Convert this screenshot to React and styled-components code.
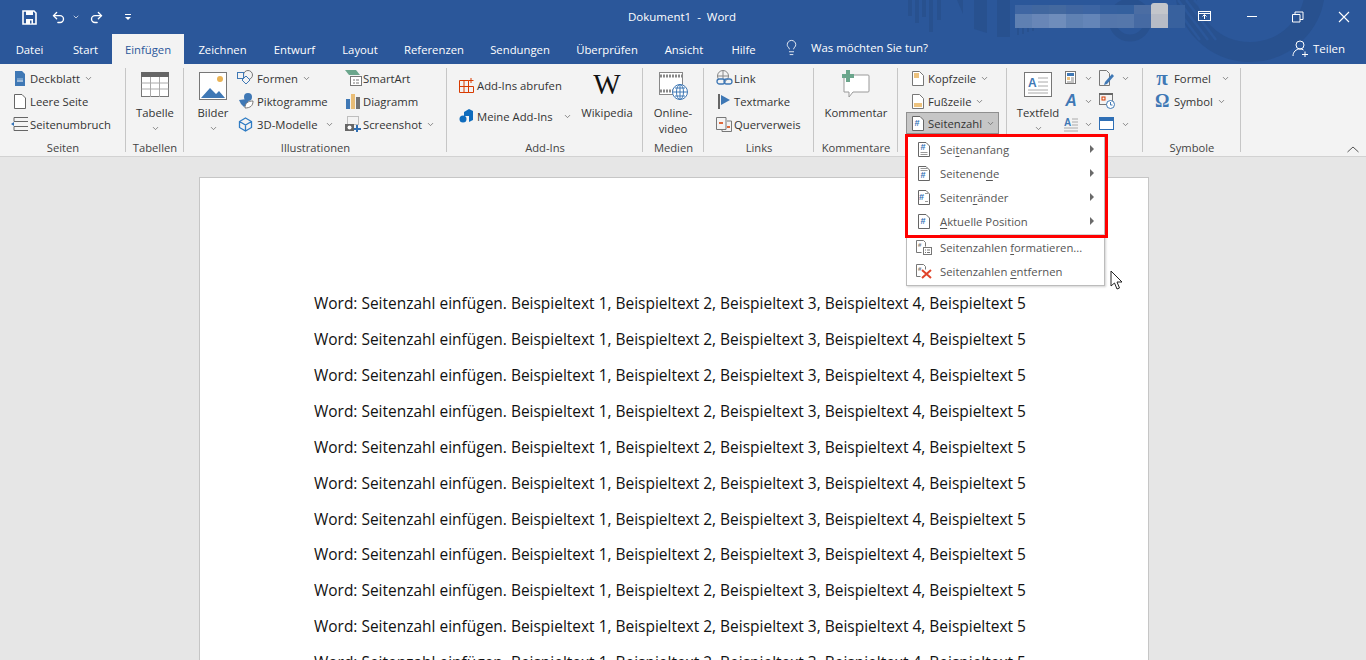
import React from "react";
import styled, { createGlobalStyle } from "styled-components";
import { Undo2, Redo2, ChevronDown, Lightbulb } from "lucide-react";

const G = createGlobalStyle`
  html,body{margin:0;padding:0;height:100%;overflow:hidden;background:#e6e6e6;}
  body{font-family:"Open Sans","Noto Sans",sans-serif;}
  #root{height:660px;overflow:hidden;}
`;
const Shell = styled.div`width:1366px;height:660px;overflow:hidden;display:flex;flex-direction:column;position:relative;`;
const Head = styled.div`height:64px;background:#2b579a;position:relative;color:#fff;flex:none;overflow:hidden;`;
const TitleRow = styled.div`height:34px;display:flex;align-items:center;position:relative;`;
const Qat = styled.div`display:flex;align-items:center;width:600px;padding-left:22px;`;
const UndoIcon = styled(Undo2)`margin-left:14px;flex:none;`;
const RedoIcon = styled(Redo2)`margin-left:9px;flex:none;`;
const QatCaret = styled(ChevronDown)`width:8px;height:8px;color:#fff;margin-left:6px;flex:none;`;
const QatMore = styled.svg`margin-left:21px;flex:none;`;
const Title = styled.div`position:absolute;left:628px;top:8px;font-size:11.5px;line-height:17px;white-space:pre;`;
const TabRow = styled.div`height:30px;display:flex;align-items:center;position:relative;`;
const Tab = styled.div`height:30px;width:${p=>p.$w}px;flex:none;display:flex;align-items:center;justify-content:center;font-size:11.3px;white-space:nowrap;
  background:${p=>p.$active?"#f3f3f3":"transparent"};color:${p=>p.$active?"#2b579a":"#fff"};`;
const Tell = styled.div`display:flex;align-items:center;gap:11px;margin-left:14px;margin-top:-3px;font-size:11.4px;`;
const Share = styled.div`position:absolute;left:1292px;top:6px;display:flex;align-items:center;gap:4px;font-size:11.5px;`;
const WinBtn = styled.div`position:absolute;left:${p=>p.$x}px;top:7px;width:16px;height:16px;`;
const Blur = styled.div`position:absolute;left:1015px;top:5px;width:170px;height:23px;display:flex;flex-wrap:wrap;`;
const BlurCell = styled.span`width:${p=>p.$w||17}px;height:${p=>p.$h}px;background:${p=>p.$c};`;
const BlurCap = styled.span`position:absolute;left:1151px;top:3px;width:17px;height:3px;border-radius:8px 8px 0 0;background:#c3c6cb;`;
const Deco = styled.svg`position:absolute;left:900px;top:0;`;

const Ribbon = styled.div`height:92px;background:#f3f3f3;border-bottom:1px solid #d2d2d2;flex:none;display:flex;position:relative;`;
const Group = styled.div`width:${p=>p.$w}px;flex:none;position:relative;display:flex;flex-direction:column;height:84px;margin-top:4px;
  &::after{content:"";position:absolute;right:0;top:0;bottom:0;width:1px;background:#c6c6c6;}`;
const GBody = styled.div`flex:1;min-height:0;display:flex;padding-left:${p=>p.$pl||0}px;`;
const GLabel = styled.div`height:14px;line-height:19px;text-align:center;font-size:11.2px;color:#444;white-space:pre;`;
const Col = styled.div`display:flex;flex-direction:column;margin-top:${p=>p.$mt??-1.5}px;margin-left:${p=>p.$ml||0}px;width:${p=>p.$w?p.$w+"px":"auto"};gap:${p=>p.$gap||0}px;`;
const Row = styled.div`height:23px;display:flex;align-items:center;font-size:11.3px;color:#333;white-space:nowrap;`;
const Ic = styled.span`width:${p=>p.$w||20}px;height:16px;display:flex;align-items:center;justify-content:center;flex:none;`;
const Big = styled.div`width:${p=>p.$w}px;margin-left:${p=>p.$ml||0}px;display:flex;flex-direction:column;align-items:center;font-size:11.3px;color:#333;line-height:16px;text-align:center;flex:none;`;
const BigIcon = styled.div`height:${p=>p.$h||26}px;margin-top:${p=>p.$mt??4}px;margin-bottom:${p=>p.$mb??7}px;display:flex;align-items:center;justify-content:center;`;
const Caret = styled(ChevronDown)`width:9px;height:9px;color:#666;stroke-width:2;margin-left:${p=>p.$ml||4}px;flex:none;`;
const BigCaret = styled(ChevronDown)`width:9px;height:9px;color:#666;stroke-width:2;margin-top:3px;flex:none;`;
const Pressed = styled(Row)`background:#c6c6c6;border:1px solid #8f8f8f;height:22px;box-sizing:border-box;width:93px;margin-left:-1px;margin-top:-.5px;`;
const WikiW = styled.span`font-family:"Liberation Serif",serif;font-size:29px;line-height:26px;color:#111;`;
const ItalicA = styled.span`font-family:"Liberation Sans",sans-serif;font-weight:700;font-style:italic;font-size:16px;color:#3f78b5;`;
const MathGlyph = styled.span`width:14px;flex:none;text-align:center;font-family:"Liberation Serif",serif;font-weight:700;font-size:${p=>p.$s}px;line-height:16px;color:#3f78b5;`;
const RowText = styled.span`margin-left:5px;`;
const Collapse = styled.svg`position:absolute;left:1347px;top:82px;`;

const Workspace = styled.div`flex:1;background:#e6e6e6;padding:20px 0 0 199px;display:flex;align-items:flex-start;overflow:hidden;`;
const Page = styled.div`width:950px;box-sizing:border-box;background:#fff;border:1px solid #c6c6c6;border-bottom:0;padding:107.2px 0 0 114px;height:600px;flex:none;`;
const Para = styled.div`font-size:15.47px;line-height:36px;height:35.9px;color:#111;white-space:nowrap;`;

const Menu = styled.div`position:absolute;left:906px;top:134px;width:199px;height:152px;background:#fff;border:1px solid #bcbcbc;box-shadow:1px 1px 2px rgba(0,0,0,.18);box-sizing:border-box;padding-top:2px;`;
const Item = styled.div`height:24px;display:flex;align-items:center;font-size:11.3px;color:#555;position:relative;white-space:nowrap;`;
const ItemIcon = styled.span`width:33px;display:flex;justify-content:center;flex:none;`;
const Arrow = styled.span`position:absolute;left:183px;top:8px;border-left:4px solid #6a6a6a;border-top:4px solid transparent;border-bottom:4px solid transparent;`;
const Sep = styled.div`height:1px;background:#d4d4d4;margin:1px 0 0 33px;`;
const U = styled.span`text-decoration:underline;text-underline-offset:2px;text-decoration-thickness:1px;`;
const RedBox = styled.div`position:absolute;left:905px;top:134px;width:203px;height:104px;border:3px solid #f00;box-sizing:border-box;pointer-events:none;`;
const Cursor = styled.svg`position:absolute;left:1110px;top:270px;`;

const Doc = ({c="#666",w=12,h=15,children})=><svg width={w} height={h} viewBox={`0 0 ${w} ${h}`}><path d={`M.5.5H${w-4}L${w-.5} 4V${h-.5}H.5Z`} fill="#fff" stroke={c}/>{children}</svg>;
const Hash = ({x=2.5,y=3})=><text x={x} y={y+6} fontSize="9" fontWeight="700" fill="#2f6fb5" fontFamily="Liberation Sans">#</text>;
const Lines = ({x1=2.5,x2=9.5,ys})=><path d={ys.map(y=>`M${x1} ${y}H${x2}`).join("")} stroke="#999"/>;

const lines = Array.from({length:11});
const tabs=[["Datei",59],["Start",53],["Einfügen",72,1],["Zeichnen",77],["Entwurf",67],["Layout",64],["Referenzen",84],["Sendungen",88],["Überprüfen",86],["Ansicht",68],["Hilfe",51]];
const blurTop=["#3f66a3","#41679f","#44699f","#3f65a0","#3d65a3","#35609f","#34609e","#4b6da3","#c3c6cb","#38619e"];
const blurBottom=["#5f80b2","#6886b7","#6f8dbb","#5f81b3","#6485b8","#5476ab","#5577ab","#466aa3","#b7bcc6","#38619e"];

export default function App(){
  return <Shell><G/>
  <Head>
    <Deco width="466" height="64" viewBox="0 0 466 64">
      <g fill="#28518f">
        <rect x="8" y="0" width="4" height="16"/><rect x="15" y="0" width="4" height="23"/><rect x="22" y="0" width="4" height="17"/><rect x="29" y="0" width="4" height="32"/><rect x="37" y="0" width="4" height="20"/>
        <path d="M57 0h6v14z"/><path d="M74 0h13v33l-13-4z"/><path d="M97 0h13v37H97z"/>
        <path d="M117 28h2v7h-2zM122 28h2v6h-2zM127 28h2v4h-2zM132 28h2v3h-2z"/>
      </g>
      <g fill="none" stroke="#28518f">
        <circle cx="350" cy="-13" r="65" strokeWidth="20"/>
        <circle cx="230" cy="20" r="18" strokeWidth="7"/>
      </g>
      <path d="M270 0l30 40M278 0l30 40M286 0l30 40M294 0l30 30" stroke="#2b579a" strokeWidth="2.500" fill="none"/>
    </Deco>
    <TitleRow>
      <Qat>
        <svg width="15" height="15" viewBox="0 0 15 15"><path d="M1 1h11l2 2v11H1z" fill="none" stroke="#fff" strokeWidth="1.600"/><rect x="4" y="1" width="7" height="4" fill="#fff"/><rect x="4" y="9" width="7" height="5" fill="#fff"/><rect x="8" y="10.500" width="1.500" height="3" fill="#2b579a"/></svg>
        <UndoIcon size={15} color="#fff" strokeWidth={2.200}/>
        <QatCaret/>
        <RedoIcon size={15} color="#fff" strokeWidth={2.200}/>
        <QatMore width="7" height="7" viewBox="0 0 7 7"><rect y="0" width="6" height="1" fill="#fff"/><path d="M0 3h6L3 6z" fill="#fff"/></QatMore>
      </Qat>
      <Title>Dokument1  -  Word</Title>
      <Blur>
        {blurTop.map((c,i)=><BlurCell key={i} $c={c} $h={9}/>)}
        {blurBottom.map((c,i)=><BlurCell key={i} $c={c} $h={14}/>)}
      </Blur>
      <BlurCap/>
      <WinBtn $x={1197}><svg width="16" height="16" viewBox="0 0 16 16" fill="none" stroke="#fff"><rect x="1.500" y="3.500" width="12" height="9"/><path d="M1.500 5.500h12M7.500 11V7M5.500 8.500l2-2 2 2"/></svg></WinBtn>
      <WinBtn $x={1246}><svg width="12" height="16"><path d="M1 8.500h10" stroke="#fff"/></svg></WinBtn>
      <WinBtn $x={1291}><svg width="14" height="14" fill="none" stroke="#fff"><path d="M1.500 4.500h7.500v7.500H1.500zM4 4.500V2h8v7.500h-3"/></svg></WinBtn>
      <WinBtn $x={1337}><svg width="14" height="14" fill="none" stroke="#fff" strokeWidth="1.100"><path d="M2 2l10 10M12 2L2 12"/></svg></WinBtn>
    </TitleRow>
    <TabRow>
      {tabs.map(([t,w,a])=><Tab key={t} $w={w} $active={a===1}>{t}</Tab>)}
      <Tell><Lightbulb size={17} strokeWidth={1.200}/>Was möchten Sie tun?</Tell>
      <Share><svg width="17" height="17" viewBox="0 0 17 17" fill="none" stroke="#fff"><circle cx="8" cy="5" r="4"/><path d="M1 16c0-4 3-7 7-7 1.500 0 2.500.3 3.500 1M10 14.500h6M13 11.500v6"/></svg>Teilen</Share>
    </TabRow>
  </Head>
  <Ribbon>
    <Group $w={126}>
      <GBody $pl={10}><Col>
        <Row><Ic><svg width="12" height="15"><path d="M1 0h7l3 3v12H1z" fill="#3f78b5"/><path d="M3 10h6" stroke="#fff"/><path d="M3 8h6" stroke="#a9c6e4"/></svg></Ic>Deckblatt<Caret/></Row>
        <Row><Ic><Doc/></Ic>Leere Seite</Row>
        <Row><Ic><svg width="18" height="14" fill="none" stroke="#666"><path d="M3 .5h14M3 4.500h14M3 9.500h14M3 13.500h14M3 .5v4M3 9.500v4"/><path d="M0 7l3-2v4z" fill="#2f6fb5" stroke="none"/></svg></Ic>Seitenumbruch</Row>
      </Col></GBody>
      <GLabel>Seiten</GLabel>
    </Group>
    <Group $w={58}>
      <GBody><Big $w={58}>
        <BigIcon><svg width="29" height="26"><rect x=".5" y=".5" width="27" height="24" fill="#fff" stroke="#777"/><rect width="28" height="5" fill="#666"/><path d="M.5 11h27M.5 17h27M9.500 5v20M18.500 5v20" stroke="#aaa"/></svg></BigIcon>
        Tabelle<BigCaret/>
      </Big></GBody>
      <GLabel>Tabellen</GLabel>
    </Group>
    <Group $w={263}>
      <GBody $pl={11}>
        <Big $w={36}>
          <BigIcon $h={28} $mb={5}><svg width="29" height="28"><rect x=".5" y=".5" width="27" height="27" fill="#fff" stroke="#777"/><circle cx="21" cy="7" r="3" fill="#eab354"/><path d="M2 26l9-10 6 6 3-3 6 7z" fill="#3f78b5"/></svg></BigIcon>
          Bilder<BigCaret/>
        </Big>
        <Col $w={109} $ml={3}>
          <Row><Ic $w={23}><svg width="18" height="16" fill="none" stroke="#3f78b5"><circle cx="11" cy="5" r="4.500" stroke="#777"/><rect x=".5" y="2.500" width="6" height="6"/><path d="M9 6l4 4-4 4-4-4z" fill="#f3f3f3"/></svg></Ic>Formen<Caret/></Row>
          <Row><Ic $w={23}><svg width="16" height="16"><circle cx="10" cy="4" r="4" fill="#3f78b5"/><path d="M1 7l8-1 2 4-5 4-3-3z" fill="#3f78b5"/><path d="M7 15c0-5 3-7 8-7 0 5-3 7-8 7z" fill="#fff" stroke="#777"/></svg></Ic>Piktogramme</Row>
          <Row><Ic $w={23}><svg width="15" height="15" fill="none" stroke="#2f7cc4" strokeWidth="1.300"><path d="M7.500 1l6 3.500v6l-6 3.500-6-3.500v-6zM1.500 4.500l6 3.500 6-3.500M7.500 8v6"/></svg></Ic>3D-Modelle<Caret $ml={7}/></Row>
        </Col>
        <Col>
          <Row><Ic $w={20}><svg width="17" height="16"><path d="M0 0h11l4 5H4z" fill="#6ba68c"/><rect x="5.500" y="6.500" width="11" height="9" fill="#fff" stroke="#777"/><path d="M8 10h2M8 13h2M11 10h3M11 13h3" stroke="#777"/></svg></Ic>SmartArt</Row>
          <Row><Ic $w={20}><svg width="15" height="15"><rect y="5" width="4" height="10" fill="#3f78b5"/><rect x="5" width="4" height="15" fill="#e9bd76"/><rect x="10" y="3" width="4" height="12" fill="#737373"/></svg></Ic>Diagramm</Row>
          <Row><Ic $w={20}><svg width="16" height="16"><rect x="2.500" y=".5" width="11" height="8" fill="none" stroke="#888" strokeDasharray="1 1"/><rect y="8" width="9" height="7" fill="#666"/><circle cx="4.500" cy="11.500" r="2" fill="#fff"/><path d="M11 9h2v3h3v2h-3v2h-2v-2H9v-2h2z" fill="#2f6fb5"/></svg></Ic>Screenshot<Caret/></Row>
        </Col>
      </GBody>
      <GLabel>Illustrationen</GLabel>
    </Group>
    <Group $w={196}>
      <GBody $pl={8}>
        <Col $w={124} $mt={6} $gap={8}>
          <Row><Ic $w={22}><svg width="15" height="15" fill="none" stroke="#d83b01"><path d="M.5 2.500h9v12h-9zM9.500 8.500h5v6h-5zM.5 8.500h9M5 2.500v12M12 0v5M9.500 2.500h5"/></svg></Ic>Add-Ins abrufen</Row>
          <Row><Ic $w={22}><svg width="15" height="15"><path d="M5 3l5-3 4 2v9l-4 2V7H5z" fill="#0f6cbd"/><circle cx="4" cy="10" r="3.500" fill="#0f6cbd"/></svg></Ic>Meine Add-Ins<Caret $ml={10}/></Row>
        </Col>
        <Big $w={58} $ml={-1}>
          <BigIcon $mt={3} $mb={8}><WikiW>W</WikiW></BigIcon>
          Wikipedia
        </Big>
      </GBody>
      <GLabel>Add-Ins</GLabel>
    </Group>
    <Group $w={61}>
      <GBody><Big $w={60}>
        <BigIcon $h={28} $mt={4} $mb={5}><svg width="30" height="28"><rect x="1.500" y=".5" width="23" height="22" fill="#fff" stroke="#888"/><path d="M2 4h22M2 19h22" stroke="#888" strokeWidth="3" strokeDasharray="2 1"/><circle cx="22" cy="20" r="7.500" fill="#fff" stroke="#3f78b5"/><path d="M15 20h14M22 13v14M17 16h10M17 24h10" stroke="#3f78b5"/><ellipse cx="22" cy="20" rx="3.500" ry="7.500" fill="none" stroke="#3f78b5"/></svg></BigIcon>
        Online-<br/>video
      </Big></GBody>
      <GLabel>Medien</GLabel>
    </Group>
    <Group $w={110}>
      <GBody $pl={10}><Col>
        <Row><Ic $w={20}><svg width="17" height="16" fill="none"><circle cx="7" cy="6" r="5.500" stroke="#888"/><path d="M1 6h12M7 0v12" stroke="#888"/><rect x="1" y="9" width="8" height="5" rx="2.500" fill="#f3f3f3" stroke="#3f78b5" strokeWidth="1.300"/><rect x="8" y="9" width="8" height="5" rx="2.500" stroke="#3f78b5" strokeWidth="1.300"/></svg></Ic>Link</Row>
        <Row><Ic $w={20}><svg width="12" height="15"><rect y="0" width="2" height="15" fill="#666"/><path d="M3 1l9 5-9 5z" fill="#3f78b5"/></svg></Ic>Textmarke</Row>
        <Row><Ic $w={20}><svg width="16" height="15" fill="none"><path d="M.5.5H10v12H.5zM11 4h4.500v10.500H6V13" stroke="#777"/><path d="M3 6h4M11 10h3" stroke="#d83b01" strokeWidth="1.600"/></svg></Ic>Querverweis</Row>
      </Col></GBody>
      <GLabel>Links</GLabel>
    </Group>
    <Group $w={84}>
      <GBody><Big $w={84}>
        <BigIcon $h={31} $mt={1} $mb={5}><svg width="30" height="30"><path d="M3 5h24a1 1 0 0 1 1 1v15a1 1 0 0 1-1 1H12l-4 5v-5H3z" fill="#fff" stroke="#999"/><path d="M5 0h4v4h4v4H9v4H5V8H1V4h4z" fill="#6ba68c"/></svg></BigIcon>
        Kommentar
      </Big></GBody>
      <GLabel>Kommentare</GLabel>
    </Group>
    <Group $w={109}>
      <GBody $pl={9}><Col>
        <Row><Ic $w={21}><svg width="12" height="15"><path d="M.5.5h7l4 4v10H.5z" fill="#fff" stroke="#777"/><rect x="2" y="2" width="5" height="5" fill="#edc27d"/></svg></Ic>Kopfzeile<Caret/></Row>
        <Row><Ic $w={21}><svg width="12" height="15"><path d="M.5.5h7l4 4v10H.5z" fill="#fff" stroke="#777"/><rect x="2" y="9" width="8" height="4" fill="#edc27d"/></svg></Ic>Fußzeile<Caret/></Row>
        <Pressed><Ic $w={21}><Doc><Hash y={4}/></Doc></Ic>Seitenzahl<Caret/></Pressed>
      </Col></GBody>
      <GLabel> </GLabel>
    </Group>
    <Group $w={136}>
      <GBody $pl={9}>
        <Big $w={44}>
          <BigIcon><svg width="29" height="26"><rect x=".5" y=".5" width="27" height="24" fill="#fff" stroke="#777"/><text x="4" y="15" fontSize="12" fontWeight="700" fill="#3f78b5" fontFamily="Liberation Sans">A</text><path d="M14 6h10M14 10h10M14 14h10M4 18h20M4 21h20" stroke="#aaa"/></svg></BigIcon>
          Textfeld<BigCaret/>
        </Big>
        <Col $w={35} $ml={4}>
          <Row><Ic $w={14}><svg width="12" height="14"><rect x=".5" y=".5" width="10" height="12" fill="#fff" stroke="#777"/><rect x="2" y="2" width="7" height="3" fill="#3f78b5"/><rect x="2" y="6" width="3" height="3" fill="#edc27d"/><path d="M6 7h3M6 9h3M2 11h7" stroke="#888"/></svg></Ic><Caret $ml={6}/></Row>
          <Row><Ic $w={14}><ItalicA>A</ItalicA></Ic><Caret $ml={6}/></Row>
          <Row><Ic $w={14}><svg width="16" height="15"><text x="0" y="9" fontSize="10" fontWeight="700" fill="#3f78b5" fontFamily="Liberation Sans">A</text><path d="M8 2h7M8 5h7M8 8h7M0 11h15M0 14h15" stroke="#aaa"/></svg></Ic><Caret $ml={6}/></Row>
        </Col>
        <Col>
          <Row><Ic $w={16}><svg width="16" height="16" fill="none"><path d="M.5.5h7l3 3v12H.5z" stroke="#777"/><path d="M6 12l7-8 2 2-7 8-3 1z" fill="#3f78b5"/></svg></Ic><Caret $ml={6}/></Row>
          <Row><Ic $w={16}><svg width="16" height="16" fill="none"><rect x=".5" y=".5" width="13" height="11" stroke="#777"/><rect width="14" height="2" fill="#666"/><rect x="3" y="4" width="3" height="3" stroke="#d83b01"/><circle cx="11.500" cy="11.500" r="4" fill="#fff" stroke="#3f78b5"/><path d="M11.500 9v3h2" stroke="#3f78b5"/></svg></Ic></Row>
          <Row><Ic $w={16}><svg width="16" height="14"><rect x=".5" y=".5" width="14" height="12" fill="#fff" stroke="#2f6fb5"/><rect width="15" height="4" fill="#2f6fb5"/></svg></Ic><Caret $ml={6}/></Row>
        </Col>
      </GBody>
      <GLabel> </GLabel>
    </Group>
    <Group $w={98}>
      <GBody $pl={12}><Col>
        <Row><MathGlyph $s={21}>π</MathGlyph><RowText>Formel</RowText><Caret $ml={10}/></Row>
        <Row><MathGlyph $s={18}>Ω</MathGlyph><RowText>Symbol</RowText><Caret/></Row>
      </Col></GBody>
      <GLabel>Symbole</GLabel>
    </Group>
    <Collapse width="12" height="7"><path d="M.5 6l5.500-5 5.500 5" fill="none" stroke="#555"/></Collapse>
  </Ribbon>
  <Workspace><Page>{lines.map((_,i)=><Para key={i}>Word: Seitenzahl einfügen. Beispieltext 1, Beispieltext 2, Beispieltext 3, Beispieltext 4, Beispieltext 5</Para>)}</Page></Workspace>
  <Menu>
    <Item><ItemIcon><Doc><Hash y={2}/><Lines ys={[10.5,12.5]}/></Doc></ItemIcon><span>Sei<U>t</U>enanfang</span><Arrow/></Item>
    <Item><ItemIcon><Doc><Lines ys={[2.5,4.5]}/><Hash y={6}/></Doc></ItemIcon><span>Seitenen<U>d</U>e</span><Arrow/></Item>
    <Item><ItemIcon><Doc><Hash x={1} y={4}/><Lines x1={7} x2={10} ys={[3.5,11.5]}/></Doc></ItemIcon><span>Seiten<U>r</U>änder</span><Arrow/></Item>
    <Item><ItemIcon><Doc><Hash y={4}/></Doc></ItemIcon><span><U>A</U>ktuelle Position</span><Arrow/></Item>
    <Sep/>
    <Item><ItemIcon><svg width="16" height="15" fill="none" stroke="#777"><path d="M.5.5h7l2 2v4M.5.5v12h5"/><text x="2" y="7" fontSize="6" fontWeight="700" fill="#777" stroke="none" fontFamily="Liberation Sans">#</text><rect x="7.500" y="7.500" width="8" height="7" fill="#fff"/><path d="M9 10h1M11 10h3M9 12.500h1M11 12.500h3"/></svg></ItemIcon><span>Seitenzahlen <U>f</U>ormatieren...</span></Item>
    <Item><ItemIcon><svg width="16" height="15" fill="none"><path d="M.5.5h7l2 2v3M.5.5v12h4" stroke="#777"/><text x="2" y="7" fontSize="6" fontWeight="700" fill="#777" fontFamily="Liberation Sans">#</text><path d="M6 6l9 8M15 6l-9 8" stroke="#e0442a" strokeWidth="2"/></svg></ItemIcon><span>Seitenzahlen <U>e</U>ntfernen</span></Item>
  </Menu>
  <RedBox/>
  <Cursor width="14" height="20" viewBox="0 0 14 20"><path d="M1 1v15l3.500-3 2.500 6 2.500-1-2.500-6h5z" fill="#fff" stroke="#222"/></Cursor>
  </Shell>;
}
